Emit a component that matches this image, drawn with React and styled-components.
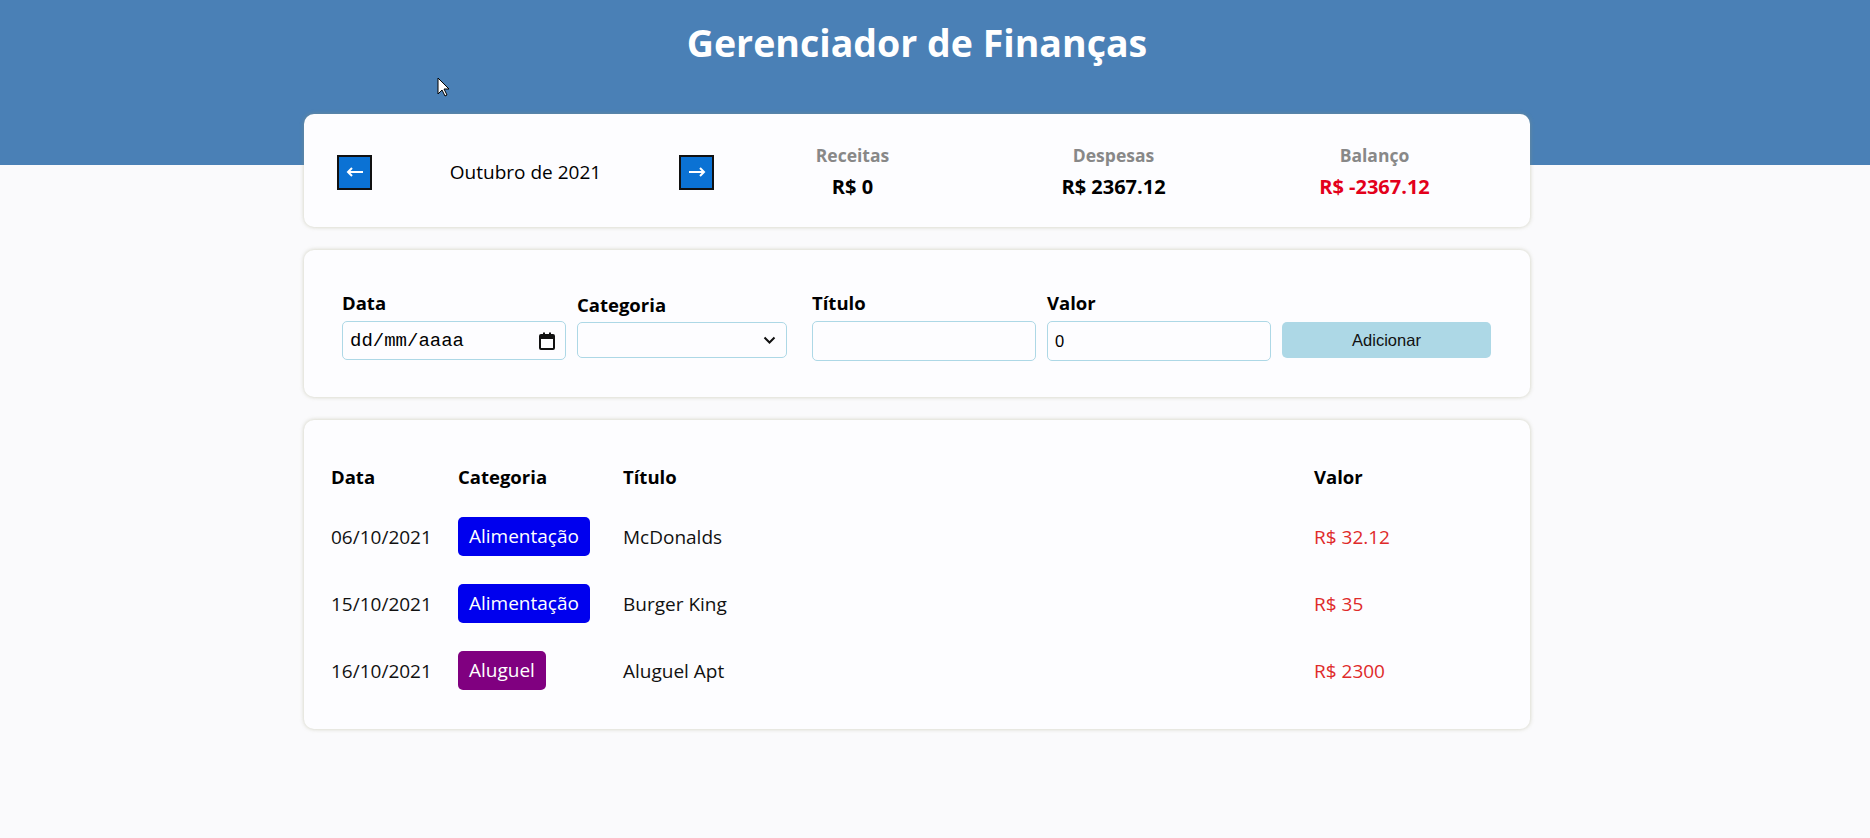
import React from 'react';
import styled, { createGlobalStyle } from 'styled-components';

const GlobalStyle = createGlobalStyle`
  * {
    box-sizing: border-box;
  }
  body {
    margin: 0;
    background: #fafafc;
    font-family: 'Open Sans', 'Noto Sans', sans-serif;
    color: #000;
  }
`;

const items = [
  { date: '06/10/2021', category: 'Alimentação', color: '#0000ee', title: 'McDonalds', value: '32.12' },
  { date: '15/10/2021', category: 'Alimentação', color: '#0000ee', title: 'Burger King', value: '35' },
  { date: '16/10/2021', category: 'Aluguel', color: '#800080', title: 'Aluguel Apt', value: '2300' },
];

const ArrowIcon = ({ dir }) => (
  <svg width="18" height="12" viewBox="0 0 18 12">
    {dir === 'left' ? (
      <path d="M17 6H2M6 2 2 6l4 4" stroke="#fff" strokeWidth="2" fill="none" />
    ) : (
      <path d="M1 6h15M12 2l4 4-4 4" stroke="#fff" strokeWidth="2" fill="none" />
    )}
  </svg>
);

const CalendarIcon = () => (
  <svg width="16" height="18" viewBox="0 0 16 18">
    <rect x="1" y="3" width="14" height="14" rx="1" stroke="#111" strokeWidth="2" fill="none" />
    <rect x="1" y="3" width="14" height="4" fill="#111" />
    <rect x="4" y="0.5" width="2" height="3" fill="#111" />
    <rect x="10" y="0.5" width="2" height="3" fill="#111" />
  </svg>
);

const Chevron = () => (
  <svg width="13" height="8" viewBox="0 0 13 8">
    <path d="M1.5 1.5 6.5 6.5 11.5 1.5" stroke="#111" strokeWidth="2" fill="none" />
  </svg>
);

const Cursor = () => (
  <svg width="13" height="20" viewBox="0 0 13 20">
    <path d="M1 1v16l4-4 3 6 2-1-3-6h5z" fill="#fff" stroke="#000" strokeWidth="1" />
  </svg>
);

export default function App() {
  return (
    <>
      <GlobalStyle />
      <Header>
        <Title>Gerenciador de Finanças</Title>
        <CursorMark>
          <Cursor />
        </CursorMark>
      </Header>
      <Body>
        <Container>
          <Card $pad="3px 25px 0 33px" $height="113px">
            <InfoRow>
              <MonthArea>
                <ArrowButton>
                  <ArrowIcon dir="left" />
                </ArrowButton>
                <MonthTitle>Outubro de 2021</MonthTitle>
                <ArrowButton>
                  <ArrowIcon dir="right" />
                </ArrowButton>
              </MonthArea>
              <Summary>
                <SummaryItem>
                  <SummaryLabel>Receitas</SummaryLabel>
                  <SummaryValue>R$ 0</SummaryValue>
                </SummaryItem>
                <SummaryItem>
                  <SummaryLabel>Despesas</SummaryLabel>
                  <SummaryValue>R$ 2367.12</SummaryValue>
                </SummaryItem>
                <SummaryItem>
                  <SummaryLabel>Balanço</SummaryLabel>
                  <SummaryValue $color="#e3001b">R$ -2367.12</SummaryValue>
                </SummaryItem>
              </Summary>
            </InfoRow>
          </Card>

          <Card $pad="41px 13px 36px 38px">
            <FormRow>
              <Field>
                <FieldLabel>Data</FieldLabel>
                <Box>
                  <DateInput type="text" placeholder="dd/mm/aaaa" />
                  <CalendarIcon />
                </Box>
              </Field>
              <Field>
                <FieldLabel $shift="2px">Categoria</FieldLabel>
                <Box $width="210px" $height="36px" $top="1px">
                  <Select defaultValue="">
                    <option value=""></option>
                    <option value="food">Alimentação</option>
                    <option value="rent">Aluguel</option>
                  </Select>
                  <Chevron />
                </Box>
              </Field>
              <Field>
                <FieldLabel>Título</FieldLabel>
                <TextInput type="text" />
              </Field>
              <Field>
                <FieldLabel>Valor</FieldLabel>
                <TextInput type="number" defaultValue="0" />
              </Field>
              <Field>
                <FieldLabel>&nbsp;</FieldLabel>
                <AddButton>Adicionar</AddButton>
              </Field>
            </FormRow>
          </Card>

          <Card $pad="30px 20px 25px 27px">
            <Table>
              <thead>
                <tr>
                  <Th $width="127px">Data</Th>
                  <Th $width="165px">Categoria</Th>
                  <Th $width="691px">Título</Th>
                  <Th>Valor</Th>
                </tr>
              </thead>
              <tbody>
                {items.map((item) => (
                  <tr key={item.date}>
                    <Td>{item.date}</Td>
                    <Td>
                      <Badge $color={item.color}>{item.category}</Badge>
                    </Td>
                    <Td>{item.title}</Td>
                    <Td $color="#df2a2a">R$ {item.value}</Td>
                  </tr>
                ))}
              </tbody>
            </Table>
          </Card>
        </Container>
      </Body>
    </>
  );
}

const Header = styled.header`
  position: relative;
  height: 165px;
  padding: 17px 36px 0 0;
  background: #4a80b6;
  text-align: center;
`;

const Title = styled.h1`
  margin: 0;
  color: #fff;
  font-size: 37.5px;
  font-weight: 700;
  line-height: 52px;
`;

const CursorMark = styled.div`
  position: absolute;
  left: 437px;
  top: 77px;
  line-height: 0;
`;

const Body = styled.main`
  margin-top: -51px;
  padding: 0 36px 40px 0;
`;

const Container = styled.div`
  width: 1226px;
  margin: 0 auto;
  display: flex;
  flex-direction: column;
  gap: 23px;
  position: relative;
`;

const Card = styled.section`
  background: #fdfdff;
  border-radius: 10px;
  box-shadow: 0 0 4px rgba(150, 150, 110, 0.45);
  padding: ${(p) => p.$pad};
  height: ${(p) => p.$height || 'auto'};
`;

const InfoRow = styled.div`
  display: flex;
  align-items: center;
  height: 100%;
`;

const MonthArea = styled.div`
  flex: 1;
  display: flex;
  align-items: center;
  padding-right: 8px;
`;

const ArrowButton = styled.button`
  width: 35px;
  height: 35px;
  padding: 0;
  display: grid;
  place-items: center;
  background: #0b72d4;
  border: 2px solid #111;
  cursor: pointer;
`;

const MonthTitle = styled.div`
  flex: 1;
  text-align: center;
  font-size: 19px;
`;

const Summary = styled.div`
  width: 783px;
  display: flex;
`;

const SummaryItem = styled.div`
  flex: 1;
  text-align: center;
`;

const SummaryLabel = styled.div`
  color: #888;
  font-weight: 700;
  font-size: 17.5px;
  line-height: 24px;
`;

const SummaryValue = styled.div`
  margin-top: 6px;
  color: ${(p) => p.$color || '#000'};
  font-weight: 700;
  font-size: 20px;
  line-height: 28px;
`;

const FormRow = styled.div`
  display: grid;
  grid-template-columns: repeat(5, minmax(0, 1fr));
`;

const Field = styled.label`
  display: flex;
  flex-direction: column;
  min-width: 0;
`;

const FieldLabel = styled.div`
  font-weight: 700;
  font-size: 18.5px;
  line-height: 24px;
  margin-bottom: 6px;
  position: relative;
  top: ${(p) => p.$shift || '0'};
`;

const Box = styled.div`
  display: flex;
  align-items: center;
  width: ${(p) => p.$width || 'calc(100% - 11px)'};
  height: ${(p) => p.$height || '39px'};
  margin-top: ${(p) => p.$top || '0'};
  padding: 0 10px 0 7px;
  background: #fdfdff;
  border: 1px solid #add8e6;
  border-radius: 5px;
`;

const DateInput = styled.input`
  flex: 1;
  min-width: 0;
  width: 0;
  padding: 0;
  border: none;
  background: transparent;
  outline: none;
  font-family: 'Liberation Mono', monospace;
  font-size: 19px;
  color: #000;
  &::placeholder {
    color: #000;
  }
`;

const Select = styled.select`
  flex: 1;
  min-width: 0;
  height: 100%;
  border: none;
  background: transparent;
  appearance: none;
  outline: none;
  font-family: 'Liberation Sans', sans-serif;
  font-size: 16.5px;
`;

const TextInput = styled.input`
  width: calc(100% - 11px);
  min-width: 0;
  height: 40px;
  padding: 0 7px;
  background: #fdfdff;
  border: 1px solid #add8e6;
  border-radius: 5px;
  outline: none;
  font-family: 'Liberation Sans', sans-serif;
  font-size: 16.5px;
  color: #000;
  appearance: textfield;
  &::-webkit-inner-spin-button {
    appearance: none;
  }
`;

const AddButton = styled.button`
  width: 209px;
  height: 36px;
  margin-top: 1px;
  background: #add8e6;
  border: none;
  border-radius: 5px;
  font-family: 'Liberation Sans', sans-serif;
  font-size: 16.5px;
  color: #111;
  cursor: pointer;
`;

const Table = styled.table`
  width: 100%;
  border-collapse: collapse;
`;

const Th = styled.th`
  width: ${(p) => p.$width || 'auto'};
  height: 53px;
  padding: 0;
  text-align: left;
  font-weight: 700;
  font-size: 18.5px;
`;

const Td = styled.td`
  height: 67px;
  padding: 0;
  font-size: 19px;
  color: ${(p) => p.$color || '#111'};
`;

const Badge = styled.span`
  display: inline-block;
  height: 39px;
  line-height: 39px;
  padding: 0 11px;
  border-radius: 5px;
  background: ${(p) => p.$color};
  color: #fff;
`;
